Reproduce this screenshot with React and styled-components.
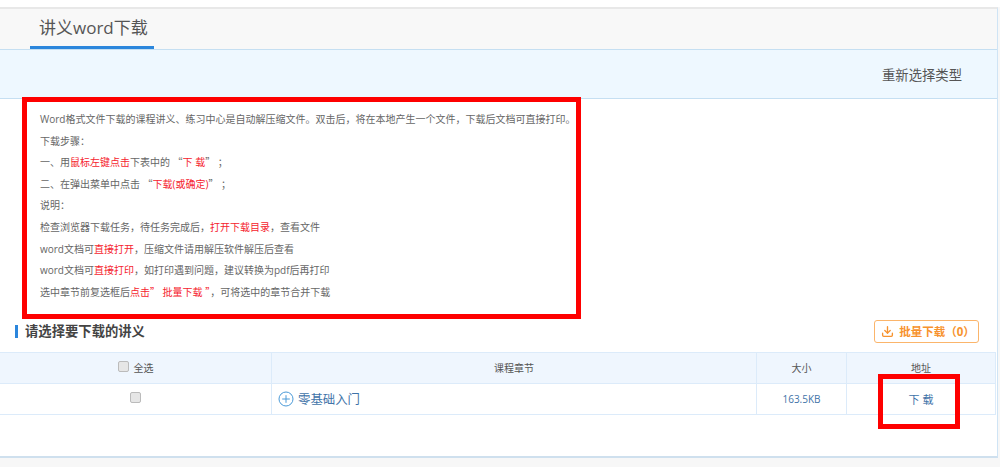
import React from 'react'
import styled, { createGlobalStyle } from 'styled-components'
import { FiDownload } from 'react-icons/fi'

const GlobalStyle = createGlobalStyle`
  html, body {
    margin: 0;
    padding: 0;
    background: #f7f7f7;
    font-family: "Open Sans", "Noto Sans CJK SC", sans-serif;
    overflow: hidden;
  }
`

const Page = styled.div`
  width: 1000px;
  height: 467px;
  padding-top: 7px;
  box-sizing: border-box;
  position: relative;
  background: linear-gradient(#fff 7px, #f7f7f7 7px);
`

const Panel = styled.div`
  width: 998px;
  height: 451px;
  box-sizing: border-box;
  border-top: 2px solid #e8e8e8;
  border-bottom: 2px solid #cfe0ee;
  border-right: 1px solid #cfe4f5;
  background: #fff;
`

const TabBar = styled.div`
  height: 40px;
  background: #f8f8f8;
  padding-left: 30px;
  display: flex;
`

const Tab = styled.div`
  width: 124px;
  height: 40px;
  box-sizing: border-box;
  border-bottom: 3px solid #2b86dc;
  padding-left: 9px;
  font-size: 17px;
  line-height: 37px;
  color: #555;
  white-space: nowrap;
`

const InfoBar = styled.div`
  height: 50px;
  box-sizing: border-box;
  background: #eef8ff;
  border-top: 1px solid #c5dff2;
  border-bottom: 1px solid #c5dff2;
  display: flex;
  justify-content: flex-end;
  align-items: center;
  padding-right: 35px;
  font-size: 13.33px;
  color: #555;
`

const Notes = styled.div`
  padding: 10px 0 0 40px;
  height: 217px;
  box-sizing: border-box;
  font-size: 10px;
  line-height: 21.6px;
  color: #666;
`

const NoteLine = styled.div`
  height: 21.6px;
  white-space: nowrap;
`

const Red = styled.span`
  color: #f5222d;
`

const Quote = styled.span`
  font-family: "Noto Sans CJK SC", sans-serif;
  font-feature-settings: "fwid";
  line-height: 0;
`

const SectionHead = styled.div`
  height: 30px;
  display: flex;
  align-items: center;
  justify-content: space-between;
  padding: 0 18px 0 15px;
`

const SectionTitle = styled.div`
  border-left: 3px solid #2b86dc;
  padding-left: 7px;
  height: 13px;
  line-height: 13px;
  font-size: 13.33px;
  font-weight: 700;
  color: #444;
`

const BatchButton = styled.div`
  width: 105px;
  height: 23px;
  box-sizing: border-box;
  border: 1px solid #fbb56b;
  border-radius: 3px;
  display: flex;
  align-items: center;
  justify-content: center;
  gap: 5px;
  padding-left: 3px;
  font-size: 11.5px;
  font-weight: 700;
  color: #f7932e;
  white-space: nowrap;
`

const Table = styled.div`
  width: 996px;
  border-top: 1px solid #dcebfa;
  margin-top: 6px;
`

const Row = styled.div`
  display: grid;
  grid-template-columns: 272px 485px 90px 149px;
  height: 31px;
  box-sizing: border-box;
  border-bottom: 1px solid #dcebfa;
  background: ${p => (p.$head ? '#eff6fe' : '#fff')};
  font-size: 10px;
  color: ${p => (p.$head ? '#555' : '#3f73a8')};
`

const Cell = styled.div`
  display: flex;
  align-items: center;
  justify-content: ${p => (p.$left ? 'flex-start' : 'center')};
  gap: ${p => (p.$left ? '4px' : '5px')};
  padding-left: ${p => (p.$left ? '6px' : '0')};
  border-right: 1px solid #dcebfa;
`

const HeadLabel = styled.span`
  margin-top: -1px;
`

const Check = styled.span`
  width: 9px;
  height: 9px;
  border: 1px solid #bbb;
  border-radius: 2px;
  background: #e6e6e6;
  margin-top: -3px;
`

const ChapterLink = styled.span`
  font-size: 12.4px;
  color: #3f73a8;
`

const DownloadLink = styled.span`
  font-size: 11px;
  color: #3f73a8;
`

const Highlight = styled.div`
  position: absolute;
  box-sizing: border-box;
  border: 5px solid #fe0000;
`

const NoteFrame = styled(Highlight)`
  left: 22px;
  top: 97px;
  width: 559px;
  height: 222px;
`

const LinkFrame = styled(Highlight)`
  left: 878px;
  top: 374px;
  width: 82px;
  height: 55px;
`

const PlusCircle = () => (
  <svg width="16" height="16" viewBox="0 0 16 16" fill="none" stroke="#4a9ad8" strokeWidth="1">
    <circle cx="8" cy="8" r="7" />
    <path d="M8 4.2v7.6M4.2 8h7.6" />
  </svg>
)

export default function App() {
  return (
    <Page>
      <GlobalStyle />
      <Panel>
        <TabBar>
          <Tab>讲义word下载</Tab>
        </TabBar>
        <InfoBar>重新选择类型</InfoBar>
        <Notes>
          <NoteLine>Word格式文件下载的课程讲义、练习中心是自动解压缩文件。双击后，将在本地产生一个文件，下载后文档可直接打印。</NoteLine>
          <NoteLine>下载步骤：</NoteLine>
          <NoteLine>一、用<Red>鼠标左键点击</Red>下表中的 <Quote>“</Quote><Red>下 载</Red><Quote>”</Quote> ；</NoteLine>
          <NoteLine>二、在弹出菜单中点击 <Quote>“</Quote><Red>下载(或确定)</Red><Quote>”</Quote> ；</NoteLine>
          <NoteLine>说明：</NoteLine>
          <NoteLine>检查浏览器下载任务，待任务完成后，<Red>打开下载目录</Red>，查看文件</NoteLine>
          <NoteLine>word文档可<Red>直接打开</Red>，压缩文件请用解压软件解压后查看</NoteLine>
          <NoteLine>word文档可<Red>直接打印</Red>，如打印遇到问题，建议转换为pdf后再打印</NoteLine>
          <NoteLine>选中章节前复选框后<Red>点击<Quote>”</Quote> 批量下载 <Quote>”</Quote></Red>，可将选中的章节合并下载</NoteLine>
        </Notes>
        <SectionHead>
          <SectionTitle>请选择要下载的讲义</SectionTitle>
          <BatchButton>
            <FiDownload size={13} strokeWidth={2.5} />
            批量下载（0）
          </BatchButton>
        </SectionHead>
        <Table>
          <Row $head>
            <Cell><Check /><HeadLabel>全选</HeadLabel></Cell>
            <Cell><HeadLabel>课程章节</HeadLabel></Cell>
            <Cell><HeadLabel>大小</HeadLabel></Cell>
            <Cell><HeadLabel>地址</HeadLabel></Cell>
          </Row>
          <Row>
            <Cell><Check /></Cell>
            <Cell $left><PlusCircle /><ChapterLink>零基础入门</ChapterLink></Cell>
            <Cell>163.5KB</Cell>
            <Cell><DownloadLink>下 载</DownloadLink></Cell>
          </Row>
        </Table>
      </Panel>
      <NoteFrame />
      <LinkFrame />
    </Page>
  )
}
